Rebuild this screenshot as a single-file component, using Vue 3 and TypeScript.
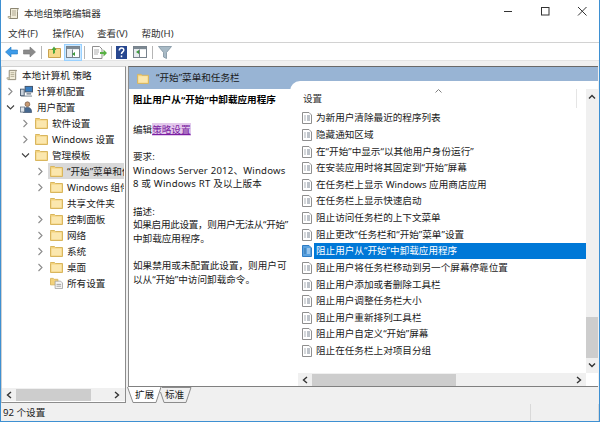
<script setup lang="ts">
interface TreeRow { label: string; depth: number; icon: string; arrow: '' | 'right' | 'down'; selected?: boolean }

const menus = ['文件(F)', '操作(A)', '查看(V)', '帮助(H)']

const tree: TreeRow[] = [
  { label: '计算机配置', depth: 1, icon: 'computer', arrow: 'right' },
  { label: '用户配置', depth: 1, icon: 'user', arrow: 'down' },
  { label: '软件设置', depth: 2, icon: 'folder', arrow: 'right' },
  { label: 'Windows 设置', depth: 2, icon: 'folder', arrow: 'right' },
  { label: '管理模板', depth: 2, icon: 'folder', arrow: 'down' },
  { label: '“开始”菜单和任务栏', depth: 3, icon: 'folder', arrow: 'right', selected: true },
  { label: 'Windows 组件', depth: 3, icon: 'folder', arrow: 'right' },
  { label: '共享文件夹', depth: 3, icon: 'folder', arrow: '' },
  { label: '控制面板', depth: 3, icon: 'folder', arrow: 'right' },
  { label: '网络', depth: 3, icon: 'folder', arrow: 'right' },
  { label: '系统', depth: 3, icon: 'folder', arrow: 'right' },
  { label: '桌面', depth: 3, icon: 'folder', arrow: 'right' },
  { label: '所有设置', depth: 3, icon: 'allsettings', arrow: '' }
]

const settings = [
  '为新用户清除最近的程序列表',
  '隐藏通知区域',
  '在“开始”中显示“以其他用户身份运行”',
  '在安装应用时将其固定到“开始”屏幕',
  '在任务栏上显示 Windows 应用商店应用',
  '在任务栏上显示快速启动',
  '阻止访问任务栏的上下文菜单',
  '阻止更改“任务栏和“开始”菜单”设置',
  '阻止用户从“开始”中卸载应用程序',
  '阻止用户将任务栏移动到另一个屏幕停靠位置',
  '阻止用户添加或者删除工具栏',
  '阻止用户调整任务栏大小',
  '阻止用户重新排列工具栏',
  '阻止用户自定义“开始”屏幕',
  '阻止在任务栏上对项目分组'
]
const selectedSetting = 8

function indent(depth: number): string {
  return `${(depth - 1) * 15 + 2}px`
}
</script>

<template>
  <div class="win">
    <svg class="defs" width="0" height="0">
      <symbol id="folder" viewBox="0 0 13 12">
        <path d="M.5 2.500V1.500h4l1 1h7v9H.5z" fill="#f3d27c" stroke="#d9b65e" />
        <path d="M1.500 3.500h10v7h-10z" fill="#fbe7ae" />
      </symbol>
      <symbol id="policy" viewBox="0 0 13 13">
        <path d="M3.500 1.500h8c-1 1-1 2-1 3v7h-8c1-1 1-2 1-3z" fill="#f1ecd9" stroke="#8c8672" />
        <path d="M1 9.500h2.500c0 1-.5 2-1 2-1 0-1.500-1-1.500-2zM5 4h4M5 6h4M5 8h4" fill="#e5dfc6" stroke="#a39c84" stroke-width=".8" />
      </symbol>
      <symbol id="computer" viewBox="0 0 14 13">
        <rect x="5.500" y="1.500" width="8" height="6" fill="#3a7fc2" stroke="#3d4f66" />
        <path d="M7 8.500h5v2H7z" fill="#8d99a6" />
        <rect x=".5" y="4.500" width="4" height="7" fill="#c9d2dc" stroke="#4d5d70" />
        <path d="M1 12h12" stroke="#6d7b8a" />
      </symbol>
      <symbol id="user" viewBox="0 0 14 13">
        <circle cx="8" cy="3.500" r="2.600" fill="#c79a73" stroke="#6d5340" stroke-width=".7" />
        <path d="M3.500 12.500c0-4 1.500-5.500 4.500-5.500s4.500 1.500 4.500 5.500z" fill="#46688f" stroke="#2f4560" stroke-width=".7" />
        <rect x=".5" y="6.500" width="4.500" height="5.500" fill="#dfe5ec" stroke="#5a6b7d" stroke-width=".8" />
      </symbol>
      <symbol id="allsettings" viewBox="0 0 14 13">
        <path d="M.5 1.500h3l1 1h4v6h-8z" fill="#f3d27c" stroke="#d9b65e" />
        <path d="M5.500 4.500h6l2 2v6h-8z" fill="#f4f4f4" stroke="#9a9a9a" stroke-width=".8" />
        <path d="M7 8h5M7 10h5" stroke="#8a8a8a" stroke-width=".8" />
      </symbol>
      <symbol id="setting" viewBox="0 0 10 12">
        <path d="M.5.500h6.500l2.500 2.500v8.500h-9z" fill="#fff" stroke="#8f8f8f" />
        <path d="M2.500 4h1M2.500 6h1M2.500 8h1" stroke="#55606e" />
        <path d="M5 4h3M5 6h3M5 8h3" stroke="#7c8794" />
      </symbol>
      <symbol id="setting-sel" viewBox="0 0 10 12">
        <path d="M.5.500h6.500l2.500 2.500v8.500h-9z" fill="#5aa2e0" stroke="#2f7cc4" />
        <path d="M2.500 4h1M2.500 6h1M2.500 8h1" stroke="#12406e" />
        <path d="M5 4h3M5 6h3M5 8h3" stroke="#d6e8f7" />
      </symbol>
      <symbol id="chev-right" viewBox="0 0 7 9"><path d="M1.500 1l3.500 3.500L1.500 8" fill="none" stroke="#8c8c8c" stroke-width="1.100" /></symbol>
      <symbol id="chev-down" viewBox="0 0 9 7"><path d="M1 1.500l3.500 3.500L8 1.500" fill="none" stroke="#404040" stroke-width="1.100" /></symbol>
      <symbol id="panel" viewBox="0 0 14 12">
        <rect x=".5" y=".5" width="13" height="11" fill="#e7ebef" stroke="#77828c" />
        <path d="M1 1h12v2H1z" fill="#7d8993" />
        <path d="M6.500 3.500v8" stroke="#77828c" />
        <path d="M7 4h6v7H7z" fill="#fff" />
      </symbol>
    </svg>

    <header class="title">
      <svg class="title-icon" width="13" height="13"><use href="#policy" /></svg>
      <span class="title-text">本地组策略编辑器</span>
      <div class="controls">
        <svg width="10" height="10" viewBox="0 0 10 10"><path d="M1 5.500h8" stroke="#333" /></svg>
        <svg width="10" height="10" viewBox="0 0 10 10"><rect x="1.500" y="1.500" width="7.500" height="7.500" fill="none" stroke="#333" /></svg>
        <svg width="10" height="10" viewBox="0 0 10 10"><path d="M1 1l8.500 8.500M9.500 1L1 9.500" stroke="#333" fill="none" /></svg>
      </div>
    </header>

    <nav class="menu">
      <span v-for="m in menus" :key="m" class="menu-item">{{ m }}</span>
    </nav>

    <div class="toolbar">
      <svg class="tool back" width="13" height="12" viewBox="0 0 13 12"><path d="M.5 6L6 1v3h6.500v4H6v3z" fill="#3d9be9" stroke="#1f78c4" stroke-width=".6" /></svg>
      <svg class="tool fwd" width="13" height="12" viewBox="0 0 13 12"><path d="M12.500 6L7 1v3H.5v4H7v3z" fill="#8a8a8a" stroke="#777" stroke-width=".6" /></svg>
      <i class="tsep sep1" />
      <svg class="tool up" width="13" height="12" viewBox="0 0 13 12">
        <path d="M.5 3.500h4l1-1h7v9H.5z" fill="#f7d98a" stroke="#c9a24e" />
        <path d="M5 8l0-4-1.500 0L6 .5 8.500 4H7v3z" fill="#4aa53c" />
      </svg>
      <span class="tool-on"><svg width="14" height="12"><use href="#panel" /></svg><i class="tri" /></span>
      <i class="tsep sep2" />
      <svg class="tool export" width="15" height="13" viewBox="0 0 15 13">
        <path d="M.5.500h7l2.500 2.500v9.500H.5z" fill="#fff" stroke="#8f8f8f" />
        <path d="M2 4h5M2 6h5M2 8h4" stroke="#9a9a9a" stroke-width=".8" />
        <path d="M8 6h3.500V3.500L15 7l-3.500 3.500V8H8z" fill="#58b044" />
      </svg>
      <i class="tsep sep3" />
      <svg class="tool help" width="11" height="13" viewBox="0 0 11 13">
        <rect width="11" height="13" fill="#27478f" />
        <path d="M3.300 4.500c0-3.300 4.500-3.300 4.500-.5 0 2-2.300 1.800-2.300 4M5.500 9.500v1.800" stroke="#fff" stroke-width="1.500" fill="none" />
      </svg>
      <span class="tool view"><svg width="14" height="12"><use href="#panel" /></svg><i class="tri tri-l" /></span>
      <i class="tsep sep4" />
      <svg class="tool filter" width="14" height="13" viewBox="0 0 14 13"><path d="M.5.500h13L8.500 6.500v6l-3-1.500V6.500z" fill="#a8bac6" stroke="#7f929f" stroke-width=".8" /></svg>
    </div>

    <main class="main">
      <aside class="left">
        <div class="tree">
          <div class="root">
            <svg width="12" height="12"><use href="#policy" /></svg>
            <span class="label">本地计算机 策略</span>
          </div>
          <div v-for="r in tree" :key="r.label" class="node" :style="{ paddingLeft: indent(r.depth) }">
            <span class="chev">
              <svg v-if="r.arrow === 'right'" width="7" height="9"><use href="#chev-right" /></svg>
              <svg v-else-if="r.arrow === 'down'" width="9" height="7"><use href="#chev-down" /></svg>
            </span>
            <span class="node-body" :class="{ sel: r.selected }">
              <svg width="13" height="12"><use :href="'#' + r.icon" /></svg>
              <span class="label">{{ r.label }}</span>
            </span>
          </div>
        </div>
        <div class="hbar hbar-left">
          <svg width="6" height="8" viewBox="0 0 6 8"><path d="M5 1L1.500 4 5 7" fill="none" stroke="#333" stroke-width="1.400" /></svg>
          <i class="thumb thumb-left" />
          <svg class="end" width="6" height="8" viewBox="0 0 6 8"><path d="M1 1l3.500 3L1 7" fill="none" stroke="#333" stroke-width="1.400" /></svg>
        </div>
      </aside>

      <section class="right">
        <div class="right-top">
          <div class="hdr">
            <svg width="12" height="11"><use href="#folder" /></svg>
            <span class="hdr-text">“开始”菜单和任务栏</span>
          </div>
          <div class="body">
            <article class="details">
              <p class="d-title">阻止用户从“开始”中卸载应用程序</p>
              <p class="d-edit">编辑<a class="link">策略设置</a></p>
              <p class="d-block d-req">要求:<br /><span class="wide">Windows Server 2012、Windows</span><br /><span class="wide">8 或 Windows RT 及以上版本</span></p>
              <p class="d-block">描述:<br /><span class="tight">如果启用此设置，则用户无法从“开始”</span><br />中卸载应用程序。</p>
              <p class="d-block">如果禁用或未配置此设置，则用户可<br />以从“开始”中访问卸载命令。</p>
            </article>
            <div class="listcol">
              <div class="listwrap">
                <div class="list">
                  <div class="list-head">
                    <span>设置</span>
                    <svg class="caret" width="7" height="4" viewBox="0 0 7 4"><path d="M.5 3.500l3-3 3 3" fill="none" stroke="#808080" /></svg>
                    <i class="head-sep" />
                  </div>
                  <div v-for="(s, i) in settings" :key="s" class="row">
                    <svg class="row-icon" width="10" height="12"><use :href="i === selectedSetting ? '#setting-sel' : '#setting'" /></svg>
                    <span class="row-text" :class="{ selrow: i === selectedSetting }">{{ s }}</span>
                  </div>
                </div>
                <div class="vbar">
                  <svg width="8" height="6" viewBox="0 0 8 6"><path d="M1 4.500l3-3 3 3" fill="none" stroke="#333" stroke-width="1.400" /></svg>
                  <i class="vthumb" />
                  <svg width="8" height="6" viewBox="0 0 8 6"><path d="M1 1.500l3 3 3-3" fill="none" stroke="#333" stroke-width="1.400" /></svg>
                </div>
              </div>
              <div class="hbar hbar-right">
                <svg width="6" height="8" viewBox="0 0 6 8"><path d="M5 1L1.500 4 5 7" fill="none" stroke="#333" stroke-width="1.400" /></svg>
                <i class="thumb thumb-right" />
                <svg class="end" width="6" height="8" viewBox="0 0 6 8"><path d="M1 1l3.500 3L1 7" fill="none" stroke="#333" stroke-width="1.400" /></svg>
              </div>
            </div>
          </div>
        </div>
        <div class="tabs">
          <span class="tab tab-a">
            <svg width="35" height="16" viewBox="0 0 35 16"><path d="M.5 0L6 15.500h23L34 0" fill="#fff" stroke="#8c8c8c" /></svg>
            <b>扩展</b>
          </span>
          <span class="tab tab-b">
            <svg width="32" height="16" viewBox="0 0 32 16"><path d="M.5 5L4 15.500h22L31 .5H2" fill="#f0f0f0" stroke="#8c8c8c" /></svg>
            <b>标准</b>
          </span>
        </div>
      </section>
    </main>

    <footer class="status">
      <span class="s-main">92 个设置</span>
      <span class="s-cell" />
      <span class="s-end" />
    </footer>
  </div>
</template>

<style>
html, body { margin: 0; background: #fff; }
</style>

<style scoped>
.win {
  width: 600px;
  height: 422px;
  box-sizing: border-box;
  border: 1px solid #3e90d2;
  border-top: 0;
  background: #f0f0f0;
  display: flex;
  flex-direction: column;
  overflow: hidden;
  font-family: "Noto Sans", "Noto Sans CJK SC", sans-serif;
  font-size: 9.6px;
  color: #1a1a1a;
}
.defs { position: absolute; }
svg { display: block; flex: none; }
i { display: block; }

.title {
  height: 26px;
  background: #fff;
  display: flex;
  align-items: center;
  padding-left: 6px;
  flex: none;
}
.title-text { margin-left: 4px; font-size: 9.6px; color: #333; }
.controls {
  margin-left: auto;
  display: flex;
  gap: 27px;
  margin-right: 12px;
  padding-bottom: 4px;
}

.menu {
  height: 16px;
  box-sizing: border-box;
  flex: none;
  background: #fff;
  display: flex;
  align-items: center;
  padding: 0 0 2px 7px;
}
.menu-item { width: 44.500px; color: #333; }

.toolbar {
  height: 19px;
  box-sizing: border-box;
  flex: none;
  background: #fff;
  display: flex;
  align-items: center;
  padding: 1px 0 0 4px;
  border-top: 1px solid #d2d2d2;
  margin-bottom: 5px;
  border-bottom: 1px solid #e4e4e4;
}
.fwd { margin-left: 5px; }
.tsep { width: 1px; height: 13px; background: #b5b5b5; }
.sep1 { margin-left: 5px; }
.up { margin-left: 6px; }
.tool-on {
  margin-left: 3px;
  width: 18px;
  height: 17px;
  box-sizing: border-box;
  background: #cce8ff;
  border: 1px solid #99d1ff;
  display: flex;
  align-items: center;
  justify-content: center;
  position: relative;
}
.tri {
  position: absolute;
  left: 7px;
  top: 7px;
  width: 0;
  height: 0;
  border: 2.500px solid transparent;
  border-right: 3.500px solid #3a9a3a;
  border-left: 0;
}
.sep2 { margin-left: 2px; }
.export { margin-left: 7px; }
.sep3 { margin-left: 4px; }
.help { margin-left: 4px; }
.view { margin-left: 6px; position: relative; }
.tri-l { left: 3px; top: 4px; }
.sep4 { margin-left: 5px; }
.filter { margin-left: 5px; }

.main { flex: 1; display: flex; min-height: 0; }

.left {
  width: 125px;
  flex: none;
  background: #fff;
  border-top: 1px solid #d0d0d0;
  border-left: 1px solid #d0d0d0;
  border-right: 1px solid #8c8c8c;
  border-bottom: 1px solid #8c8c8c;
  box-sizing: border-box;
  display: flex;
  flex-direction: column;
  margin-bottom: 1px;
}
.tree { flex: 1; min-height: 0; overflow: hidden; }
.root, .node { height: 16px; display: flex; align-items: center; white-space: nowrap; }
.node { padding-right: 1px; }
.root { padding-left: 4px; gap: 4px; }
.chev {
  width: 13px;
  margin-right: 2px;
  flex: none;
  display: flex;
  justify-content: center;
}
.node-body {
  display: flex;
  align-items: center;
  gap: 4px;
  flex: 1;
  min-width: 0;
  height: 16px;
  overflow: hidden;
  padding-left: 1px;
}
.node-body.sel { background: #d9d9d9; margin-left: -1px; padding-left: 2px; }
.label { color: #1a1a1a; }

.hbar {
  flex: none;
  height: 13px;
  background: #f0f0f0;
  display: flex;
  align-items: center;
  padding: 0 4px;
  box-sizing: border-box;
}
.hbar .end { margin-left: auto; }
.thumb { height: 12px; background: #cdcdcd; }
.hbar-left { margin-bottom: 1px; padding-right: 5px; }
.thumb-left { width: 75px; margin-left: 4px; }
.hbar-right { margin-left: 8px; margin-right: 12px; }
.thumb-right { width: 144px; margin-left: 4px; }

.right {
  flex: 1;
  min-width: 0;
  margin-left: 2px;
  margin-right: 1px;
  display: flex;
  flex-direction: column;
}
.right-top {
  height: 321px;
  flex: none;
  box-sizing: border-box;
  border-top: 1px solid #696969;
  border-left: 1px solid #8c8c8c;
  border-bottom: 1px solid #808080;
  display: flex;
  flex-direction: column;
  background: #fff;
}
.hdr {
  height: 22px;
  flex: none;
  background: #98b4d4;
  display: flex;
  align-items: flex-start;
  padding: 5px 0 0 8px;
  box-sizing: border-box;
  gap: 7px;
}
.hdr svg { margin-top: 1px; }
.hdr-text { line-height: 12px; }
.body { flex: 1; min-height: 0; display: flex; }
.details {
  width: 161px;
  flex: none;
  padding: 4px 0 0 4px;
  box-sizing: border-box;
  line-height: 13.600px;
  white-space: nowrap;
}
.details p { margin: 0; }
.details .d-title { font-weight: 700; color: #000; }
.details .d-edit { margin-top: 16.400px; }
.details .d-block { margin-top: 13.600px; }
.wide { letter-spacing: .19px; }
.tight { letter-spacing: -.3px; }
.link {
  color: #7b1fa2;
  text-decoration: underline;
  background: #e3c8ec;
}
.listcol {
  flex: 1;
  min-width: 0;
  margin-top: -8px;
  background: #fff;
  border-top-left-radius: 10px;
  display: flex;
  flex-direction: column;
  position: relative;
}
.listwrap { flex: 1; min-height: 0; display: flex; }
.list { flex: 1; min-width: 0; overflow: hidden; padding-left: 12px; }
.list-head {
  height: 29px;
  padding-left: 1px;
  padding-top: 11px;
  box-sizing: border-box;
  position: relative;
  line-height: 14px;
  color: #333;
}
.caret { position: absolute; left: 133px; top: 8px; }
.head-sep {
  position: absolute;
  left: 274px;
  top: 8px;
  width: 1px;
  height: 19px;
  background: #e5e5e5;
}
.row {
  height: 16.640px;
  display: flex;
  align-items: center;
  gap: 2px;
  white-space: nowrap;
}
.row-text { flex: 1; height: 16px; line-height: 16px; padding-left: 2px; color: #1a1a1a; }
.selrow { background: #0078d7; color: #fff; }
.vbar {
  width: 12px;
  flex: none;
  background: #f0f0f0;
  display: flex;
  flex-direction: column;
  align-items: center;
  padding: 5px 0 5px;
  box-sizing: border-box;
  margin-top: 8px;
}
.vthumb { width: 12px; height: 41px; background: #cdcdcd; margin: auto 0 4px; }

.tabs {
  height: 16px;
  flex: none;
  display: flex;
}
.tab { position: relative; display: block; height: 16px; }
.tab svg { position: absolute; left: 0; top: 0; }
.tab b {
  position: relative;
  font-weight: 400;
  display: block;
  line-height: 15px;
  color: #1a1a1a;
}
.tab-a { width: 33px; margin-left: -1px; }
.tab-a b { padding-left: 8px; }
.tab-b { width: 32px; }
.tab-b b { padding-left: 5px; }

.status {
  height: 17px;
  flex: none;
  display: flex;
  align-items: center;
}
.s-main { width: 530px; padding-left: 2px; box-sizing: border-box; height: 17px; line-height: 17px; border-right: 1px solid #d9d9d9; }
.s-cell { width: 67px; height: 17px; border-right: 1px solid #d9d9d9; }
.s-end { flex: 1; }
</style>
